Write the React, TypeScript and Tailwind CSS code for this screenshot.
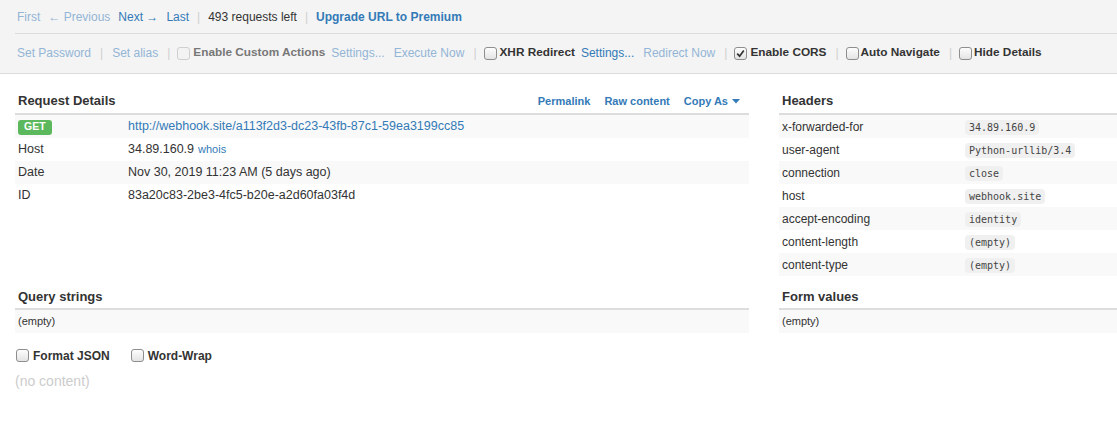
import React from "react"

function Box({ checked, disabled, className = "" }: { checked?: boolean; disabled?: boolean; className?: string }) {
  return (
    <span
      className={
        (disabled
          ? "inline-flex h-[13px] w-[13px] shrink-0 items-center justify-center rounded-[3px] border border-[#cfcfcf] bg-[#f3f3f3] "
          : "inline-flex h-[13px] w-[13px] shrink-0 items-center justify-center rounded-[3px] border border-[#8e8e8e] bg-gradient-to-b from-[#fdfdfd] to-[#e4e4e4] ") +
        className
      }
    >
      {checked && (
        <svg width="9" height="9" viewBox="0 0 9 9">
          <path d="M1.2 4.6 L3.6 7.2 L7.8 1.4" fill="none" stroke="#333" strokeWidth="1.7" />
        </svg>
      )}
    </span>
  )
}

const Sep = () => <span className="text-[#d0d0d0]">|</span>

const requestRows = [
  { label: "Host", value: "34.89.160.9", whois: true },
  { label: "Date", value: "Nov 30, 2019 11:23 AM (5 days ago)" },
  { label: "ID", value: "83a20c83-2be3-4fc5-b20e-a2d60fa03f4d" },
]

const headers = [
  ["x-forwarded-for", "34.89.160.9"],
  ["user-agent", "Python-urllib/3.4"],
  ["connection", "close"],
  ["host", "webhook.site"],
  ["accept-encoding", "identity"],
  ["content-length", "(empty)"],
  ["content-type", "(empty)"],
]

export default function App() {
  return (
    <div className="min-h-[436px] bg-white font-['Liberation_Sans',Arial,sans-serif] text-[#333]">
      {/* Top toolbar */}
      <div className="border-b border-[#dcdcdc] bg-[#f4f4f4] pl-[15px] text-[12px]">
        <div className="flex h-[34px] items-center gap-[8px] border-b border-[#dcdcdc] pl-[2px]">
          <span className="text-[#93b5d6]">First</span>
          <span className="text-[#93b5d6]">← Previous</span>
          <span className="text-[#337ab7]">Next →</span>
          <span className="text-[#337ab7]">Last</span>
          <Sep />
          <span>493 requests left</span>
          <Sep />
          <span className="font-bold text-[#337ab7]">Upgrade URL to Premium</span>
        </div>
        <div className="flex h-[39px] items-center gap-[9px] pb-[1px] pl-[2px]">
          <span className="text-[#93b5d6]">Set Password</span>
          <Sep />
          <span className="text-[#93b5d6]">Set alias</span>
          <Sep />
          <span className="inline-flex items-center gap-[6px]">
            <span className="inline-flex items-center gap-[3px]">
              <Box disabled className="-ml-[2px]" />
              <span className="text-[11.8px] font-bold text-[#777]">Enable Custom Actions</span>
            </span>
            <span className="text-[#93b5d6]">Settings...</span>
          </span>
          <span className="text-[#93b5d6]">Execute Now</span>
          <Sep />
          <span className="inline-flex items-center gap-[6px]">
            <span className="inline-flex items-center gap-[3px]">
              <Box className="-ml-[2px]" />
              <span className="text-[11.8px] font-bold">XHR Redirect</span>
            </span>
            <span className="text-[#337ab7]">Settings...</span>
          </span>
          <span className="text-[#93b5d6]">Redirect Now</span>
          <Sep />
          <span className="inline-flex items-center gap-[3px]">
            <Box checked className="-ml-[2px]" />
            <span className="text-[11.8px] font-bold">Enable CORS</span>
          </span>
          <Sep />
          <span className="inline-flex items-center gap-[2px]">
            <Box className="-ml-[2px]" />
            <span className="text-[11.8px] font-bold">Auto Navigate</span>
          </span>
          <Sep />
          <span className="inline-flex items-center gap-[2px]">
            <Box className="-ml-[2px]" />
            <span className="text-[11.8px] font-bold">Hide Details</span>
          </span>
        </div>
      </div>

      {/* Request details + headers */}
      <div className="flex pl-[15px]">
        <div className="w-[734px] pt-[18px]">
          <div className="flex h-[23px] items-start justify-between border-b-2 border-[#ddd] pl-[3px] pr-[9px]">
            <h2 className="text-[13px] font-bold leading-[18px]">Request Details</h2>
            <div className="flex gap-[14px] text-[11px] font-bold leading-[18px] text-[#337ab7]">
              <span>Permalink</span>
              <span>Raw content</span>
              <span className="inline-flex items-center gap-[4px]">
                Copy As
                <svg width="8" height="5" viewBox="0 0 8 5">
                  <path d="M0 0 H8 L4 4.5 Z" fill="#337ab7" />
                </svg>
              </span>
            </div>
          </div>
          <div className="text-[12.5px]">
            <div className="flex h-[23px] items-center bg-[#f9f9f9]">
              <div className="w-[110px] pl-[3px]">
                <span className="inline-flex h-[15px] items-center rounded-[3px] bg-[#5cb85c] px-[6px] text-[10.5px] font-bold text-white">
                  GET
                </span>
              </div>
              <span className="pl-[3px] text-[#337ab7]">
                http://webhook.site/a113f2d3-dc23-43fb-87c1-59ea3199cc85
              </span>
            </div>
            {requestRows.map((row, i) => (
              <div
                key={row.label}
                className={i % 2 === 1 ? "flex h-[23px] items-center bg-[#f9f9f9]" : "flex h-[23px] items-center"}
              >
                <div className="w-[110px] pl-[3px]">{row.label}</div>
                <div className="pl-[3px]">
                  {row.value}
                  {row.whois && <span className="ml-[4px] text-[11px] text-[#337ab7]">whois</span>}
                </div>
              </div>
            ))}
          </div>
        </div>

        <div className="ml-[30px] flex-1 pt-[18px]">
          <div className="flex h-[23px] items-start border-b-2 border-[#ddd] pl-[3px]">
            <h2 className="text-[13px] font-bold leading-[18px]">Headers</h2>
          </div>
          <div className="text-[12px]">
            {headers.map(([k, v], i) => (
              <div
                key={k}
                className={i % 2 === 0 ? "flex h-[23px] items-center bg-[#f9f9f9]" : "flex h-[23px] items-center"}
              >
                <div className="w-[183px] pl-[3px]">{k}</div>
                <div className="pl-[3px]">
                  <code className="rounded-[4px] bg-[#f0f0f0] px-[4px] py-[2px] font-['DejaVu_Sans_Mono',monospace] text-[10px] text-[#444]">
                    {v}
                  </code>
                </div>
              </div>
            ))}
          </div>
        </div>
      </div>

      {/* Query strings + form values */}
      <div className="flex pl-[15px]">
        <div className="w-[734px] pt-[12px]">
          <div className="h-[22px] border-b-2 border-[#ddd] pl-[3px]">
            <h2 className="text-[13px] font-bold leading-[18px]">Query strings</h2>
          </div>
          <div className="flex h-[23px] items-center bg-[#f9f9f9] pl-[3px] text-[11px]">(empty)</div>

          <div className="mt-[11px] flex h-[23px] items-center pl-[1px] text-[12px] font-bold">
            <span className="inline-flex items-center gap-[4px]">
              <Box />
              Format JSON
            </span>
            <span className="ml-[21px] inline-flex items-center gap-[4px]">
              <Box />
              Word-Wrap
            </span>
          </div>
          <div className="mt-[4px] text-[14px] leading-[20px] text-[#ccc]">(no content)</div>
        </div>

        <div className="ml-[30px] flex-1 pt-[12px]">
          <div className="h-[22px] border-b-2 border-[#ddd] pl-[3px]">
            <h2 className="text-[13px] font-bold leading-[18px]">Form values</h2>
          </div>
          <div className="flex h-[23px] items-center bg-[#f9f9f9] pl-[3px] text-[11px]">(empty)</div>
        </div>
      </div>
    </div>
  )
}
